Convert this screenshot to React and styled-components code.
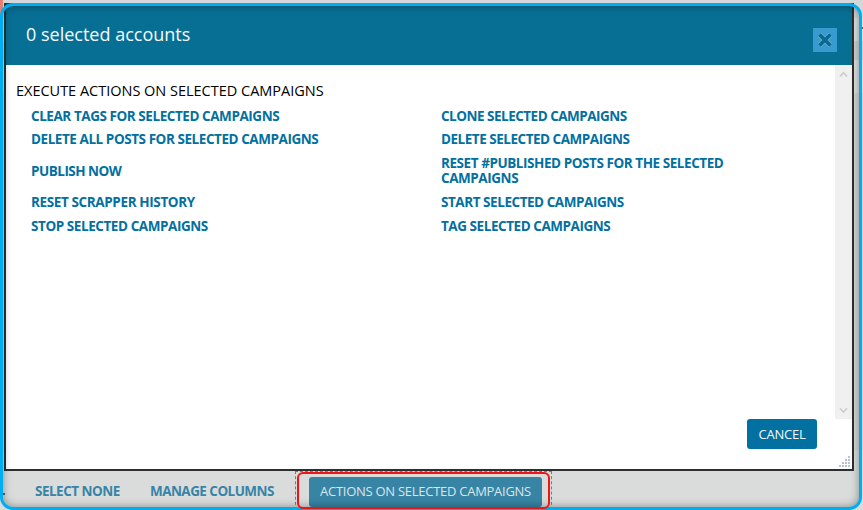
import React from "react";
import styled, { createGlobalStyle } from "styled-components";

const Global = createGlobalStyle`
  * { box-sizing: border-box; }
  html, body { margin: 0; overflow: hidden; }
  body { font-family: "Open Sans", "Noto Sans", sans-serif; background: #d5d7d8; }
  button { font-family: inherit; border: 0; padding: 0; cursor: pointer; }
`;

const Page = styled.div`
  position: relative;
  width: 863px;
  height: 510px;
  overflow: hidden;
  padding: 3px 0 0 4px;
  background:
    linear-gradient(#e37f73, #e37f73) 0 0 / 3px 32px no-repeat,
    linear-gradient(#dadcdc, #dadcdc) 0 450px / 863px 60px no-repeat,
    linear-gradient(#d4d6d7 0 18px, #dedfdf 18px 41px, #cfd1d1 41px 60px, #dedede 60px 93px, #d4d4d4 93px) 0 0 / 863px 450px no-repeat;
`;

const Dialog = styled.section`
  display: flex;
  flex-direction: column;
  width: 850px;
  height: 468px;
  border: 2px solid #2b302f;
  border-top-width: 1px;
  background: #fff;
`;

const Header = styled.header`
  display: flex;
  justify-content: space-between;
  flex: 0 0 61px;
  padding: 0 15px 0 20px;
  background: #086f94;
`;

const Title = styled.h1`
  margin: 0;
  font-size: 18px;
  font-weight: 400;
  line-height: 61px;
  color: #f4fbfd;
`;

const CloseButton = styled.button`
  display: flex;
  align-items: center;
  justify-content: center;
  width: 24px;
  height: 24px;
  margin-top: 24px;
  background: #389bd0;
`;

const Body = styled.div`
  display: flex;
  flex: 0 0 354px;
`;

const Content = styled.main`
  flex: 1;
  padding: 14px 0 0 10px;
`;

const Heading = styled.h2`
  margin: 0;
  height: 25px;
  font-size: 14.5px;
  font-weight: 400;
  line-height: 23px;
  letter-spacing: -0.01px;
  color: #000;
  white-space: nowrap;
`;

const Actions = styled.div`
  display: grid;
  grid-template-columns: 410px 300px;
  grid-template-rows: 24px 23px 40px 22px 26px;
  align-items: center;
  padding-left: 15px;
`;

const Action = styled.a`
  display: block;
  font-size: 13.5px;
  font-weight: 700;
  line-height: 15px;
  letter-spacing: ${(p) => p.$track}px;
  color: #0270a0;
`;

const Scrollbar = styled.div`
  display: flex;
  flex-direction: column;
  justify-content: space-between;
  align-items: center;
  width: 17px;
  padding: 6px 0 5px;
  background: #f0f0f0;
`;

const Footer = styled.footer`
  display: flex;
  justify-content: flex-end;
  flex: 1;
`;

const CancelButton = styled.button`
  width: 70px;
  height: 30px;
  border-radius: 3px;
  font-size: 13px;
  letter-spacing: -0.2px;
  color: #f2fafd;
  background: #0270a0;
`;

const Grip = styled.svg`
  align-self: flex-end;
  margin: 0 1px 1px 21px;
`;

const Toolbar = styled.nav`
  display: flex;
  height: 39px;
`;

const ToolLink = styled(Action)`
  width: ${(p) => p.$width}px;
  padding-left: ${(p) => p.$pad || 0}px;
  line-height: 40px;
  color: #3884a6;
  white-space: nowrap;
`;

const FocusCell = styled.div`
  width: 257px;
  height: 39px;
  padding: 5px 0 0 13px;
  border: 1px dashed #777b7c;
  border-width: 1px 1px 0;
`;

const ActionsButton = styled.button`
  display: block;
  width: 233px;
  height: 30px;
  padding-bottom: 3px;
  border-radius: 3px;
  font-size: 13px;
  letter-spacing: -0.27px;
  color: #d9e6eb;
  background: #3884a4;
  white-space: nowrap;
`;

const Frame = styled.div`
  position: absolute;
  inset: 3px 1px 0 0;
  border: 3px solid #00aeef;
  border-radius: 13px;
  box-shadow: inset 0 0 9px rgba(0, 0, 0, 0.38);
  pointer-events: none;
`;

const Highlight = styled.div`
  position: absolute;
  left: 297px;
  top: 472px;
  width: 253px;
  height: 37px;
  border: 2px solid #f01418;
  border-radius: 6px;
  pointer-events: none;
`;

const EdgeMark = styled.i`
  position: absolute;
  left: ${(p) => p.$x}px;
  top: ${(p) => p.$y}px;
  width: 2px;
  height: 2px;
  background: #555f64;
`;

const items = [
  ["CLEAR TAGS FOR SELECTED CAMPAIGNS", -0.44],
  ["CLONE SELECTED CAMPAIGNS", -0.5],
  ["DELETE ALL POSTS FOR SELECTED CAMPAIGNS", -0.44],
  ["DELETE SELECTED CAMPAIGNS", -0.48],
  ["PUBLISH NOW", -0.5],
  ["RESET #PUBLISHED POSTS FOR THE SELECTED CAMPAIGNS", -0.44],
  ["RESET SCRAPPER HISTORY", -0.38],
  ["START SELECTED CAMPAIGNS", -0.45],
  ["STOP SELECTED CAMPAIGNS", -0.43],
  ["TAG SELECTED CAMPAIGNS", -0.45],
];

const gripDots = [[9, 0], [6, 3], [9, 3], [3, 6], [6, 6], [9, 6], [0, 9], [3, 9], [6, 9], [9, 9]];

const Chevron = ({ down }) => (
  <svg width="9" height="7" viewBox="0 0 9 7" fill="none" stroke="#cdcdcd" strokeWidth="1.6">
    <path d={down ? "M1 1.2 4.5 5 8 1.2" : "M1 5.4 4.5 1.6 8 5.4"} />
  </svg>
);

export default function App() {
  return (
    <>
      <Global />
      <Page>
        <Dialog>
          <Header>
            <Title>0 selected accounts</Title>
            <CloseButton aria-label="Close">
              <svg width="14" height="14" viewBox="0 0 14 14">
                <path d="M1.5 1.5 12.5 12.5M12.5 1.5 1.5 12.5" stroke="#77b3ce" strokeWidth="4.8" />
                <path d="M1.5 1.5 12.5 12.5M12.5 1.5 1.5 12.5" stroke="#086a91" strokeWidth="3.8" />
              </svg>
            </CloseButton>
          </Header>
          <Body>
            <Content>
              <Heading>EXECUTE ACTIONS ON SELECTED CAMPAIGNS</Heading>
              <Actions>
                {items.map(([label, track]) => (
                  <Action key={label} $track={track}>{label}</Action>
                ))}
              </Actions>
            </Content>
            <Scrollbar>
              <Chevron />
              <Chevron down />
            </Scrollbar>
          </Body>
          <Footer>
            <CancelButton>CANCEL</CancelButton>
            <Grip width="13" height="13" viewBox="0 0 13 13">
              {gripDots.map(([x, y]) => (
                <rect key={`${x}-${y}`} x={x + 1} y={y + 1} width="2" height="2" fill="#bfc1cf" />
              ))}
            </Grip>
          </Footer>
        </Dialog>
        <Toolbar>
          <ToolLink $width={146} $pad={31} $track={-0.5}>SELECT NONE</ToolLink>
          <ToolLink $width={145} $track={-0.55}>MANAGE COLUMNS</ToolLink>
          <FocusCell>
            <ActionsButton>ACTIONS ON SELECTED CAMPAIGNS</ActionsButton>
          </FocusCell>
        </Toolbar>
        <EdgeMark $x={3} $y={493} />
        <EdgeMark $x={862} $y={27} />
        <Frame />
        <Highlight />
      </Page>
    </>
  );
}
